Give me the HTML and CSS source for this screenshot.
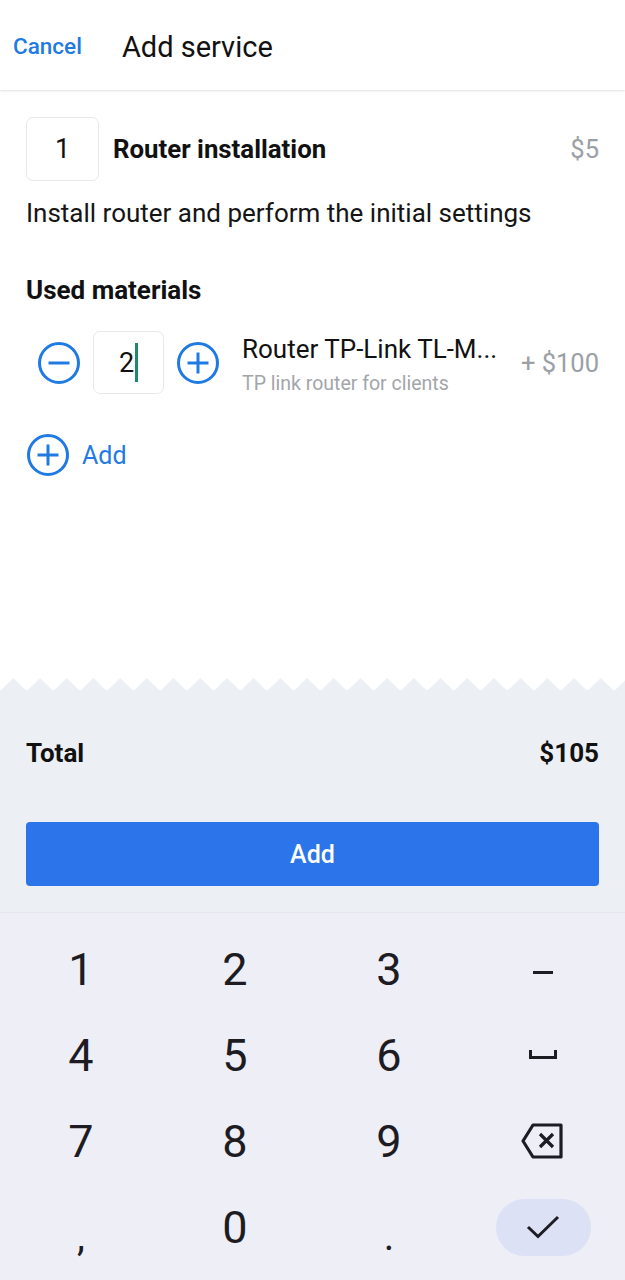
FILE: index.html
```html
<!DOCTYPE html>
<html lang="en">
<head>
  <meta charset="UTF-8">
  <title>Add service</title>
  <meta name="viewport" content="width=device-width, initial-scale=1.0" />
  <link rel="stylesheet" href="styles.css">
</head>
<body>

<div class="screen">
  <header class="header">
    <a class="cancel">Cancel</a>
    <h1>Add service</h1>
  </header>

  <main class="content">
    <div class="service-row">
      <div class="qty-box">1</div>
      <div class="service-name">Router installation</div>
      <div class="price">$5</div>
    </div>

    <p class="description">Install router and perform the initial settings</p>

    <h2>Used materials</h2>

    <div class="material-row">
      <svg class="round-btn" width="44" height="44" viewBox="0 0 44 44">
        <circle cx="22" cy="22" r="19.5" fill="none" stroke="#1f7ae3" stroke-width="3"/>
        <line x1="11.5" y1="22" x2="32.5" y2="22" stroke="#1f7ae3" stroke-width="3"/>
      </svg>
      <div class="qty-box small">2<span class="cursor"></span></div>
      <svg class="round-btn" width="44" height="44" viewBox="0 0 44 44">
        <circle cx="22" cy="22" r="19.5" fill="none" stroke="#1f7ae3" stroke-width="3"/>
        <line x1="11.5" y1="22" x2="32.5" y2="22" stroke="#1f7ae3" stroke-width="3"/>
        <line x1="22" y1="11.5" x2="22" y2="32.5" stroke="#1f7ae3" stroke-width="3"/>
      </svg>
      <div class="material-info">
        <div class="material-name">Router TP-Link TL-M...</div>
        <div class="material-sub">TP link router for clients</div>
      </div>
      <div class="price">+ $100</div>
    </div>

    <div class="add-link">
      <svg width="44" height="44" viewBox="0 0 44 44">
        <circle cx="22" cy="22" r="19.5" fill="none" stroke="#1f7ae3" stroke-width="3"/>
        <line x1="11.5" y1="22" x2="32.5" y2="22" stroke="#1f7ae3" stroke-width="3"/>
        <line x1="22" y1="11.5" x2="22" y2="32.5" stroke="#1f7ae3" stroke-width="3"/>
      </svg>
      <span>Add</span>
    </div>
  </main>

  <svg class="zigzag" width="100%" height="13">
    <defs>
      <pattern id="teeth" width="26.7" height="13" patternUnits="userSpaceOnUse">
        <path d="M0 13 L13.35 0 L26.7 13 Z" fill="#eceff3"/>
      </pattern>
    </defs>
    <rect width="100%" height="13" fill="url(#teeth)"/>
  </svg>

  <section class="summary">
    <div class="total-row">
      <span>Total</span>
      <span>$105</span>
    </div>
    <button class="add-btn">Add</button>
  </section>

  <section class="keyboard">
    <div class="key">1</div>
    <div class="key">2</div>
    <div class="key">3</div>
    <div class="key">
      <svg width="24" height="24" viewBox="0 0 24 24"><line x1="2" y1="15.5" x2="22" y2="15.5" stroke="#1c1c22" stroke-width="3"/></svg>
    </div>
    <div class="key">4</div>
    <div class="key">5</div>
    <div class="key">6</div>
    <div class="key">
      <svg width="30" height="24" viewBox="0 0 30 24"><path d="M2.5 7 V14.5 H27.5 V7" fill="none" stroke="#1c1c22" stroke-width="3"/></svg>
    </div>
    <div class="key">7</div>
    <div class="key">8</div>
    <div class="key">9</div>
    <div class="key">
      <svg width="46" height="40" viewBox="0 0 46 40">
        <path d="M13 4 H41 V36 H13 L3 20 Z" fill="none" stroke="#1c1c22" stroke-width="3.2" stroke-linejoin="round"/>
        <path d="M20 13 L33 26 M33 13 L20 26" stroke="#1c1c22" stroke-width="3.2"/>
      </svg>
    </div>
    <div class="key punct">,</div>
    <div class="key">0</div>
    <div class="key punct">.</div>
    <div class="key">
      <div class="done">
        <svg width="34" height="24" viewBox="0 0 34 24"><path d="M2 12 L12 21.5 L32 2" fill="none" stroke="#1c1c22" stroke-width="3"/></svg>
      </div>
    </div>
  </section>
</div>

</body>
</html>
```

FILE: styles.css
```css
* {
  box-sizing: border-box;
  font-family: Roboto, 'Liberation Sans', sans-serif;
}

body {
  margin: 0;
  padding: 0;
  background-color: #ffffff;
  color: #111111;
}

.screen {
  width: 625px;
  height: 1280px;
  display: flex;
  flex-direction: column;
  overflow: hidden;
}

.header {
  height: 90px;
  display: flex;
  align-items: center;
  padding: 4px 13px 0;
  box-shadow: 0 1px 2px rgba(0,0,0,0.12);
  position: relative;
  z-index: 1;
}

.cancel {
  color: #1f7ae3;
  font-size: 22.5px;
  font-weight: 500;
  margin-right: 40px;
  padding-bottom: 2px;
}

h1 {
  margin: 0;
  font-size: 29px;
  font-weight: 400;
  color: #111111;
}

.content {
  flex: 1;
  padding: 27px 26px 0;
}

.service-row {
  display: flex;
  align-items: center;
}

.qty-box {
  width: 73px;
  height: 64px;
  border: 1px solid #e8e8ea;
  border-radius: 7px;
  display: flex;
  align-items: center;
  justify-content: center;
  font-size: 27px;
  color: #111111;
}

.qty-box.small {
  width: 71px;
  height: 63px;
  margin: 0 12px;
}

.cursor {
  display: inline-block;
  width: 3px;
  height: 39px;
  background: #1d8a6c;
  margin-left: 1px;
}

.service-name {
  flex: 1;
  margin-left: 14px;
  font-size: 25.8px;
  font-weight: 700;
}

.price {
  font-size: 25.5px;
  color: #9aa0a6;
}

.description {
  margin: 17px 0 0;
  font-size: 26px;
  line-height: 30px;
  color: #151515;
}

h2 {
  margin: 47px 0 0;
  font-size: 26px;
  line-height: 30px;
  font-weight: 700;
}

.material-row {
  display: flex;
  align-items: center;
  margin-top: 26px;
  padding-left: 11px;
}

.round-btn {
  display: block;
}

.material-info {
  flex: 1;
  margin: 2px 0 -2px 22px;
}

.material-name {
  font-size: 26px;
  line-height: 30px;
  color: #111111;
}

.material-sub {
  font-size: 19.5px;
  line-height: 24px;
  color: #a2a6ab;
  margin-top: 8px;
}

.add-link {
  display: flex;
  align-items: center;
  margin-top: 39px;
  color: #1f7ae3;
  font-size: 25px;
}

.add-link svg {
  display: block;
  margin-right: 12px;
}

.zigzag {
  display: block;
  flex: none;
  margin-bottom: -1px;
}

.summary {
  background: #eceff3;
  padding: 48px 26px 26px;
}

.total-row {
  display: flex;
  justify-content: space-between;
  font-size: 26px;
  line-height: 30px;
  font-weight: 700;
}

.add-btn {
  display: block;
  width: 100%;
  height: 64px;
  margin-top: 54px;
  border: none;
  border-radius: 4px;
  background: #2b74ea;
  color: #ffffff;
  font-size: 25px;
  font-weight: 500;
}

.keyboard {
  flex: none;
  height: 368px;
  background: #eeeef6;
  border-top: 1px solid #e6e7ee;
  display: grid;
  grid-template-columns: repeat(4, 154px);
  grid-auto-rows: 86px;
  padding: 13px 4px 0;
}

.key {
  display: flex;
  align-items: center;
  justify-content: center;
  font-size: 45px;
  color: #1c1c22;
}

.key.punct {
  font-size: 40px;
  padding-top: 18px;
}

.done {
  width: 95px;
  height: 57px;
  border-radius: 29px;
  background: #dde1f6;
  display: flex;
  align-items: center;
  justify-content: center;
}
```
